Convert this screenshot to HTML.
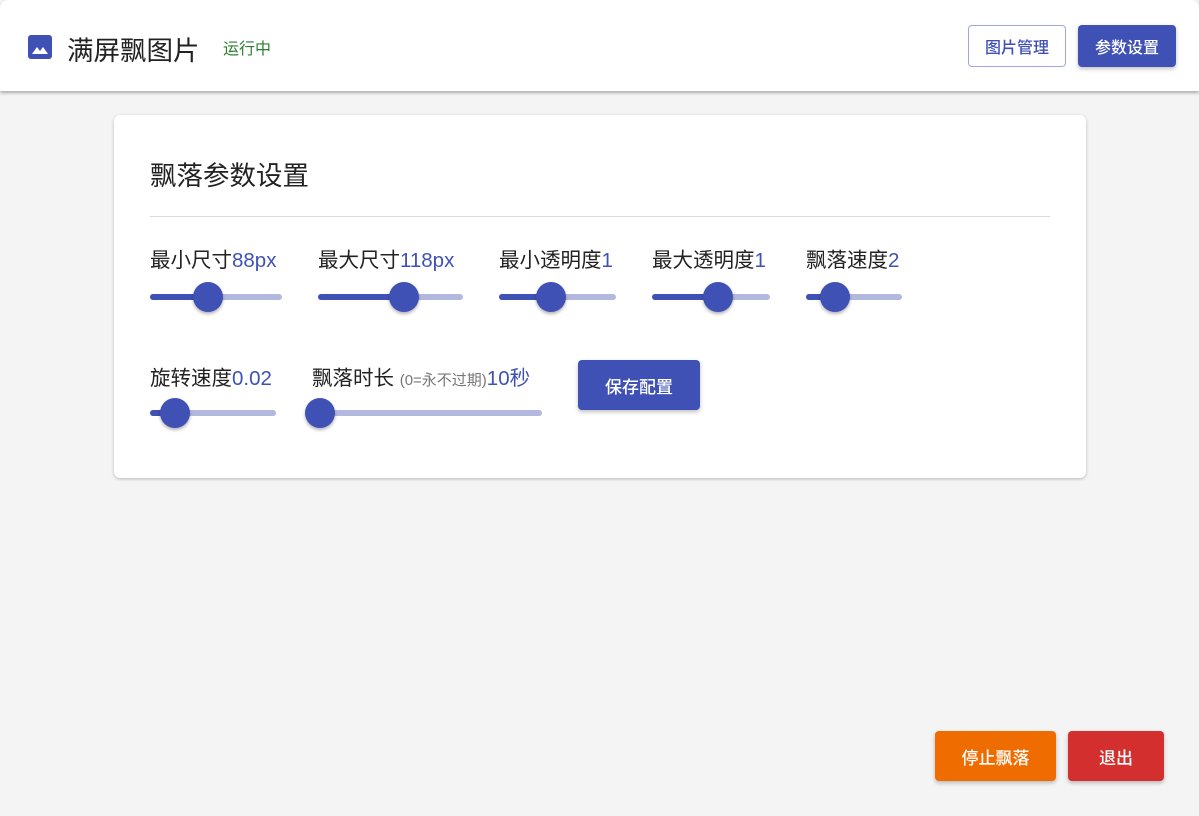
<!DOCTYPE html><html><head><meta charset="utf-8"><style>
*{box-sizing:border-box;margin:0;padding:0}
body{width:1199px;height:816px;background:#f4f4f4;font-family:"Liberation Sans","Noto Sans CJK SC",sans-serif;position:relative;overflow:hidden;color:#222}
.a{position:absolute}
.hdr{left:0;top:0;width:1199px;height:91px;background:#fff;border-radius:8px 8px 0 0;box-shadow:0 2px 3px rgba(0,0,0,.3)}
.btn{position:absolute;display:flex;align-items:center;justify-content:center;border-radius:4px;font-size:16px;color:#fff;box-shadow:0 2px 4px rgba(0,0,0,.25);font-weight:500}
.card{left:114px;top:115px;width:972px;height:363px;background:#fff;border-radius:6px;box-shadow:0 1px 3px rgba(0,0,0,.25)}
.lbl{position:absolute;font-size:20.5px;white-space:nowrap;color:#222}
.lbl b{font-weight:normal;color:#3f51b5}
.tr{position:absolute;height:6px;border-radius:3px;background:#b3b9de}
.tr i{position:absolute;left:0;top:0;height:6px;border-radius:3px;background:#3f51b5}
.th{position:absolute;width:30px;height:30px;border-radius:50%;background:#3f51b5;top:-12px;margin-left:-15px;box-shadow:0 2px 3px rgba(0,0,0,.3)}
</style></head><body>
<div class="a hdr"></div>
<svg class="a" style="left:28px;top:35px" width="24" height="24" viewBox="0 0 24 24"><rect x="0" y="0" width="24" height="24" rx="3" fill="#3f51b5"/><path d="M4 19 L9 12 L12 16 L15 12 L20 19 Z" fill="#fff"/></svg>
<div class="a" style="left:67px;top:29px;font-size:26.5px;color:#222">满屏飘图片</div>
<div class="a" style="left:223px;top:35px;font-size:16px;color:#2e7d32">运行中</div>
<div class="btn" style="left:968px;top:25px;width:98px;height:42px;background:#fff;color:#3f51b5;border:1px solid #9fa8da;box-shadow:none">图片管理</div>
<div class="btn" style="left:1078px;top:25px;width:98px;height:42px;background:#3f51b5">参数设置</div>
<div class="a card"></div>
<div class="a" style="left:150px;top:154px;font-size:26.5px;color:#222">飘落参数设置</div>
<div class="a" style="left:150px;top:216px;width:900px;height:1px;background:#ddd"></div>

<div class="lbl" style="left:150px;top:243px">最小尺寸<b>88px</b></div>
<div class="lbl" style="left:318px;top:243px">最大尺寸<b>118px</b></div>
<div class="lbl" style="left:499px;top:243px">最小透明度<b>1</b></div>
<div class="lbl" style="left:652px;top:243px">最大透明度<b>1</b></div>
<div class="lbl" style="left:806px;top:243px">飘落速度<b>2</b></div>

<div class="tr" style="left:150px;top:294px;width:132px"><i style="width:58px"></i><div class="th" style="left:58px"></div></div>
<div class="tr" style="left:318px;top:294px;width:145px"><i style="width:86px"></i><div class="th" style="left:86px"></div></div>
<div class="tr" style="left:499px;top:294px;width:117px"><i style="width:52px"></i><div class="th" style="left:52px"></div></div>
<div class="tr" style="left:652px;top:294px;width:118px"><i style="width:66px"></i><div class="th" style="left:66px"></div></div>
<div class="tr" style="left:806px;top:294px;width:96px"><i style="width:29px"></i><div class="th" style="left:29px"></div></div>

<div class="lbl" style="left:150px;top:361px">旋转速度<b>0.02</b></div>
<div class="lbl" style="left:312px;top:361px">飘落时长 <span style="font-size:15px;color:#777">(0=永不过期)</span><b>10秒</b></div>
<div class="tr" style="left:150px;top:410px;width:126px"><i style="width:25px"></i><div class="th" style="left:25px"></div></div>
<div class="tr" style="left:305px;top:410px;width:237px"><i style="width:15px"></i><div class="th" style="left:15px"></div></div>
<div class="btn" style="left:578px;top:360px;width:122px;height:50px;background:#3f51b5;font-size:17px">保存配置</div>

<div class="btn" style="left:935px;top:731px;width:121px;height:50px;background:#ef6c00;font-size:17px">停止飘落</div>
<div class="btn" style="left:1068px;top:731px;width:96px;height:50px;background:#d32f2f;font-size:17px">退出</div>
</body></html>
